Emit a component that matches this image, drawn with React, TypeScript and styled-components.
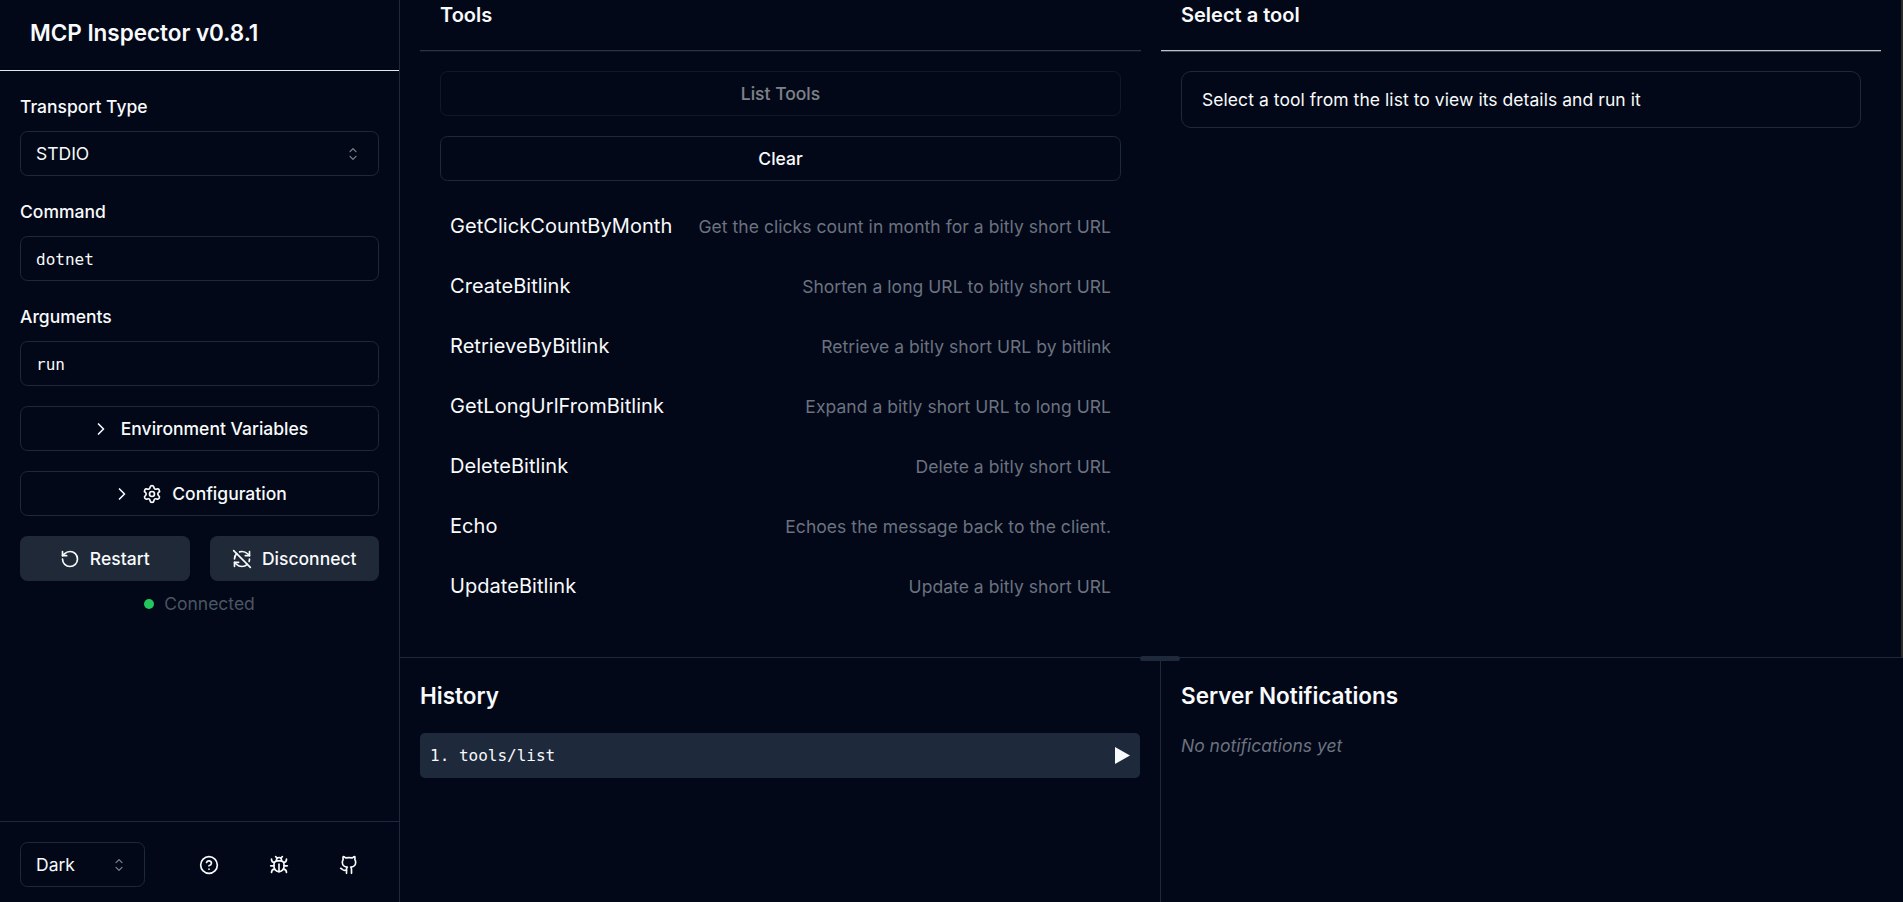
import React from "react";
import styled, { createGlobalStyle } from "styled-components";
import { Bug, ChevronRight, CircleHelp, Github, RefreshCwOff, RotateCcw, Settings } from "lucide-react";

const c = {
  bg: "#020817",
  fg: "#f8fafc",
  border: "#1e293b",
  secondary: "#1f2937",
  muted: "#6b7280",
};

const sans = `Inter, "Liberation Sans", sans-serif`;
const mono = `"DejaVu Sans Mono", "Liberation Mono", monospace`;

const GlobalStyle = createGlobalStyle`
  *, *::before, *::after { box-sizing: border-box; }
  html, body { margin: 0; padding: 0; background: ${c.bg}; overflow: hidden; }
  body { font-family: ${sans}; font-size: 20px; line-height: 30px; color: ${c.fg}; }
  h1, h2, h3, p, ul, ol { margin: 0; padding: 0; font-weight: inherit; list-style: none; }
  svg { display: block; flex: none; }
`;

const Shell = styled.div`
  display: grid;
  grid-template-columns: 400px minmax(0, 1fr);
  height: 902px;
`;

const Sidebar = styled.aside`
  display: flex;
  flex-direction: column;
  border-right: 1px solid ${c.border};
`;

const SidebarHeader = styled.header`
  height: 71px;
  padding: 15px 20px 20px 30px;
  border-bottom: 1px solid #e5e7eb;
`;

const Title = styled.h1`
  font-size: 22.5px;
  line-height: 35px;
  font-weight: 600;
  letter-spacing: -0.03px;
`;

const SidebarBody = styled.div`
  flex: 1;
  display: flex;
  flex-direction: column;
  gap: 20px;
  padding: 20px;
`;

const Field = styled.div`
  display: flex;
  flex-direction: column;
  gap: 8px;
`;

const Label = styled.label`
  font-size: 17.5px;
  font-weight: 500;
  line-height: 32px;
`;

const SelectBox = styled.button<{ $width?: string }>`
  display: flex;
  align-items: center;
  justify-content: space-between;
  width: ${(p) => p.$width ?? "100%"};
  height: 45px;
  padding: 0 15px;
  border: 1px solid ${c.border};
  border-radius: 7.5px;
  background: transparent;
  color: inherit;
  font: 400 17.5px/25px ${sans};
`;

const Input = styled.input`
  width: 100%;
  height: 45px;
  padding: 2px 15px 0;
  border: 1px solid ${c.border};
  border-radius: 7.5px;
  background: transparent;
  color: inherit;
  font: 400 16px/25px ${mono};
  outline: none;
`;

const Button = styled.button<{ $solid?: boolean }>`
  display: flex;
  align-items: center;
  justify-content: center;
  gap: 10px;
  width: 100%;
  height: 45px;
  padding: 0;
  border: ${(p) => (p.$solid ? "0" : `1px solid ${c.border}`)};
  border-radius: 7.5px;
  background: ${(p) => (p.$solid ? c.secondary : "transparent")};
  color: inherit;
  font: 500 17.5px/25px ${sans};
  &:disabled { opacity: 0.5; }
`;

const ButtonPair = styled.div`
  display: grid;
  grid-template-columns: 1fr 1fr;
  gap: 20px;
`;

const Connection = styled.div`
  display: flex;
  flex-direction: column;
  gap: 10px;
`;

const Status = styled.div`
  display: flex;
  align-items: center;
  justify-content: center;
  gap: 10px;
  font-size: 17.5px;
  line-height: 25px;
  color: #4b5563;
`;

const Dot = styled.span`
  width: 10px;
  height: 10px;
  border-radius: 50%;
  background: #22c55e;
`;

const SidebarFooter = styled.footer`
  display: flex;
  align-items: center;
  justify-content: space-between;
  height: 81px;
  padding: 20px 20px 15px;
  border-top: 1px solid ${c.border};
`;

const IconRow = styled.div`
  display: flex;
  gap: 10px;
`;

const IconButton = styled.button`
  display: flex;
  align-items: center;
  justify-content: center;
  width: 60px;
  height: 45px;
  padding: 0;
  border: 0;
  background: transparent;
  color: inherit;
`;

const Main = styled.main`
  display: grid;
  grid-template-rows: 657px minmax(0, 1fr);
`;

const Workspace = styled.section`
  display: grid;
  grid-template-columns: 721px 720px;
  gap: 20px;
  padding-left: 20px;
  border-right: 2px solid #2b2b2b;
`;

const PanelHeader = styled.header<{ $line: string; $shade: string }>`
  height: 51px;
  padding-left: 20px;
  border-bottom: 1px solid ${(p) => p.$line};
  box-shadow: 0 1px 0 ${(p) => p.$shade};
`;

const PanelTitle = styled.h3`
  font-size: 20px;
  font-weight: 600;
  line-height: 30px;
`;

const PanelBody = styled.div`
  display: flex;
  flex-direction: column;
  gap: 20px;
  padding: 20px;
`;

const ToolList = styled.ul`
  display: flex;
  flex-direction: column;
  gap: 10px;
`;

const ToolRow = styled.li`
  display: flex;
  align-items: center;
  justify-content: space-between;
  height: 50px;
  padding: 10px;
`;

const ToolName = styled.span`
  letter-spacing: 0.05px;
`;

const ToolDescription = styled.span`
  font-size: 17.5px;
  line-height: 25px;
  letter-spacing: 0.05px;
  color: ${c.muted};
`;

const Notice = styled.div`
  height: 57px;
  padding: 15px 20px;
  border: 1px solid ${c.border};
  border-radius: 10px;
  font-size: 17.5px;
  line-height: 25px;
  letter-spacing: 0.06px;
`;

const BottomPane = styled.section`
  position: relative;
  display: grid;
  grid-template-columns: 760px minmax(0, 1fr);
  border-top: 1px solid ${c.border};
`;

const DragHandle = styled.div`
  position: absolute;
  top: -2px;
  left: 740px;
  width: 40px;
  height: 5px;
  border-radius: 2.5px;
  background: ${c.border};
`;

const LogPanel = styled.div<{ $divided?: boolean }>`
  padding: 20px;
  border-left: ${(p) => (p.$divided ? `1px solid ${c.border}` : "0")};
`;

const LogTitle = styled.h2`
  margin-bottom: 20px;
  font-size: 22.5px;
  font-weight: 600;
  line-height: 35px;
`;

const HistoryItem = styled.li`
  display: flex;
  align-items: center;
  justify-content: space-between;
  height: 45px;
  padding: 0 10px;
  border-radius: 5px;
  background: ${c.border};
  font: 400 16px/25px ${mono};
`;

const Empty = styled.p`
  font-size: 17.5px;
  line-height: 25px;
  font-style: italic;
  color: ${c.muted};
`;

const SortIcon = () => (
  <svg width="20" height="20" viewBox="0 0 15 15" fill="currentColor" opacity="0.5">
    <path
      fillRule="evenodd"
      d="M4.93179 5.43179C4.75605 5.60753 4.75605 5.89245 4.93179 6.06819C5.10753 6.24392 5.39245 6.24392 5.56819 6.06819L7.49999 4.13638L9.43179 6.06819C9.60753 6.24392 9.89245 6.24392 10.0682 6.06819C10.2439 5.89245 10.2439 5.60753 10.0682 5.43179L7.81819 3.18179C7.73379 3.0974 7.61933 3.04999 7.49999 3.04999C7.38064 3.04999 7.26618 3.0974 7.18179 3.18179L4.93179 5.43179ZM10.0682 9.56819C10.2439 9.39245 10.2439 9.10753 10.0682 8.93179C9.89245 8.75606 9.60753 8.75606 9.43179 8.93179L7.49999 10.8636L5.56819 8.93179C5.39245 8.75606 5.10753 8.75606 4.93179 8.93179C4.75605 9.10753 4.75605 9.39245 4.93179 9.56819L7.18179 11.8182C7.35753 11.9939 7.64245 11.9939 7.81819 11.8182L10.0682 9.56819Z"
    />
  </svg>
);

const PlayIcon = () => (
  <svg width="15" height="17" viewBox="0 0 15 17" fill="currentColor">
    <path d="M0 0L15 8.5L0 17Z" />
  </svg>
);

const tools = [
  { name: "GetClickCountByMonth", description: "Get the clicks count in month for a bitly short URL" },
  { name: "CreateBitlink", description: "Shorten a long URL to bitly short URL" },
  { name: "RetrieveByBitlink", description: "Retrieve a bitly short URL by bitlink" },
  { name: "GetLongUrlFromBitlink", description: "Expand a bitly short URL to long URL" },
  { name: "DeleteBitlink", description: "Delete a bitly short URL" },
  { name: "Echo", description: "Echoes the message back to the client." },
  { name: "UpdateBitlink", description: "Update a bitly short URL" },
];

export default function App() {
  return (
    <>
      <GlobalStyle />
      <Shell>
        <Sidebar>
          <SidebarHeader>
            <Title>MCP Inspector v0.8.1</Title>
          </SidebarHeader>
          <SidebarBody>
            <Field>
              <Label>Transport Type</Label>
              <SelectBox>
                STDIO
                <SortIcon />
              </SelectBox>
            </Field>
            <Field>
              <Label htmlFor="command">Command</Label>
              <Input id="command" defaultValue="dotnet" spellCheck={false} />
            </Field>
            <Field>
              <Label htmlFor="arguments">Arguments</Label>
              <Input id="arguments" defaultValue="run" spellCheck={false} />
            </Field>
            <Button>
              <ChevronRight size={20} />
              Environment Variables
            </Button>
            <Button>
              <ChevronRight size={20} />
              <Settings size={20} />
              Configuration
            </Button>
            <Connection>
              <ButtonPair>
                <Button $solid>
                  <RotateCcw size={20} />
                  Restart
                </Button>
                <Button $solid>
                  <RefreshCwOff size={20} />
                  Disconnect
                </Button>
              </ButtonPair>
              <Status>
                <Dot />
                Connected
              </Status>
            </Connection>
          </SidebarBody>
          <SidebarFooter>
            <SelectBox $width="125px">
              Dark
              <SortIcon />
            </SelectBox>
            <IconRow>
              <IconButton aria-label="Help">
                <CircleHelp size={20} />
              </IconButton>
              <IconButton aria-label="Report a bug">
                <Bug size={20} />
              </IconButton>
              <IconButton aria-label="Repository">
                <Github size={20} />
              </IconButton>
            </IconRow>
          </SidebarFooter>
        </Sidebar>
        <Main>
          <Workspace>
            <div>
              <PanelHeader $line="#2b3441" $shade="#0d1421">
                <PanelTitle>Tools</PanelTitle>
              </PanelHeader>
              <PanelBody>
                <Button disabled>List Tools</Button>
                <Button>Clear</Button>
                <ToolList>
                  {tools.map((tool) => (
                    <ToolRow key={tool.name}>
                      <ToolName>{tool.name}</ToolName>
                      <ToolDescription>{tool.description}</ToolDescription>
                    </ToolRow>
                  ))}
                </ToolList>
              </PanelBody>
            </div>
            <div>
              <PanelHeader $line="#bfc1c6" $shade="#3b404b">
                <PanelTitle>Select a tool</PanelTitle>
              </PanelHeader>
              <PanelBody>
                <Notice>Select a tool from the list to view its details and run it</Notice>
              </PanelBody>
            </div>
          </Workspace>
          <BottomPane>
            <DragHandle />
            <LogPanel>
              <LogTitle>History</LogTitle>
              <ol>
                <HistoryItem>
                  <span>1. tools/list</span>
                  <PlayIcon />
                </HistoryItem>
              </ol>
            </LogPanel>
            <LogPanel $divided>
              <LogTitle>Server Notifications</LogTitle>
              <Empty>No notifications yet</Empty>
            </LogPanel>
          </BottomPane>
        </Main>
      </Shell>
    </>
  );
}
